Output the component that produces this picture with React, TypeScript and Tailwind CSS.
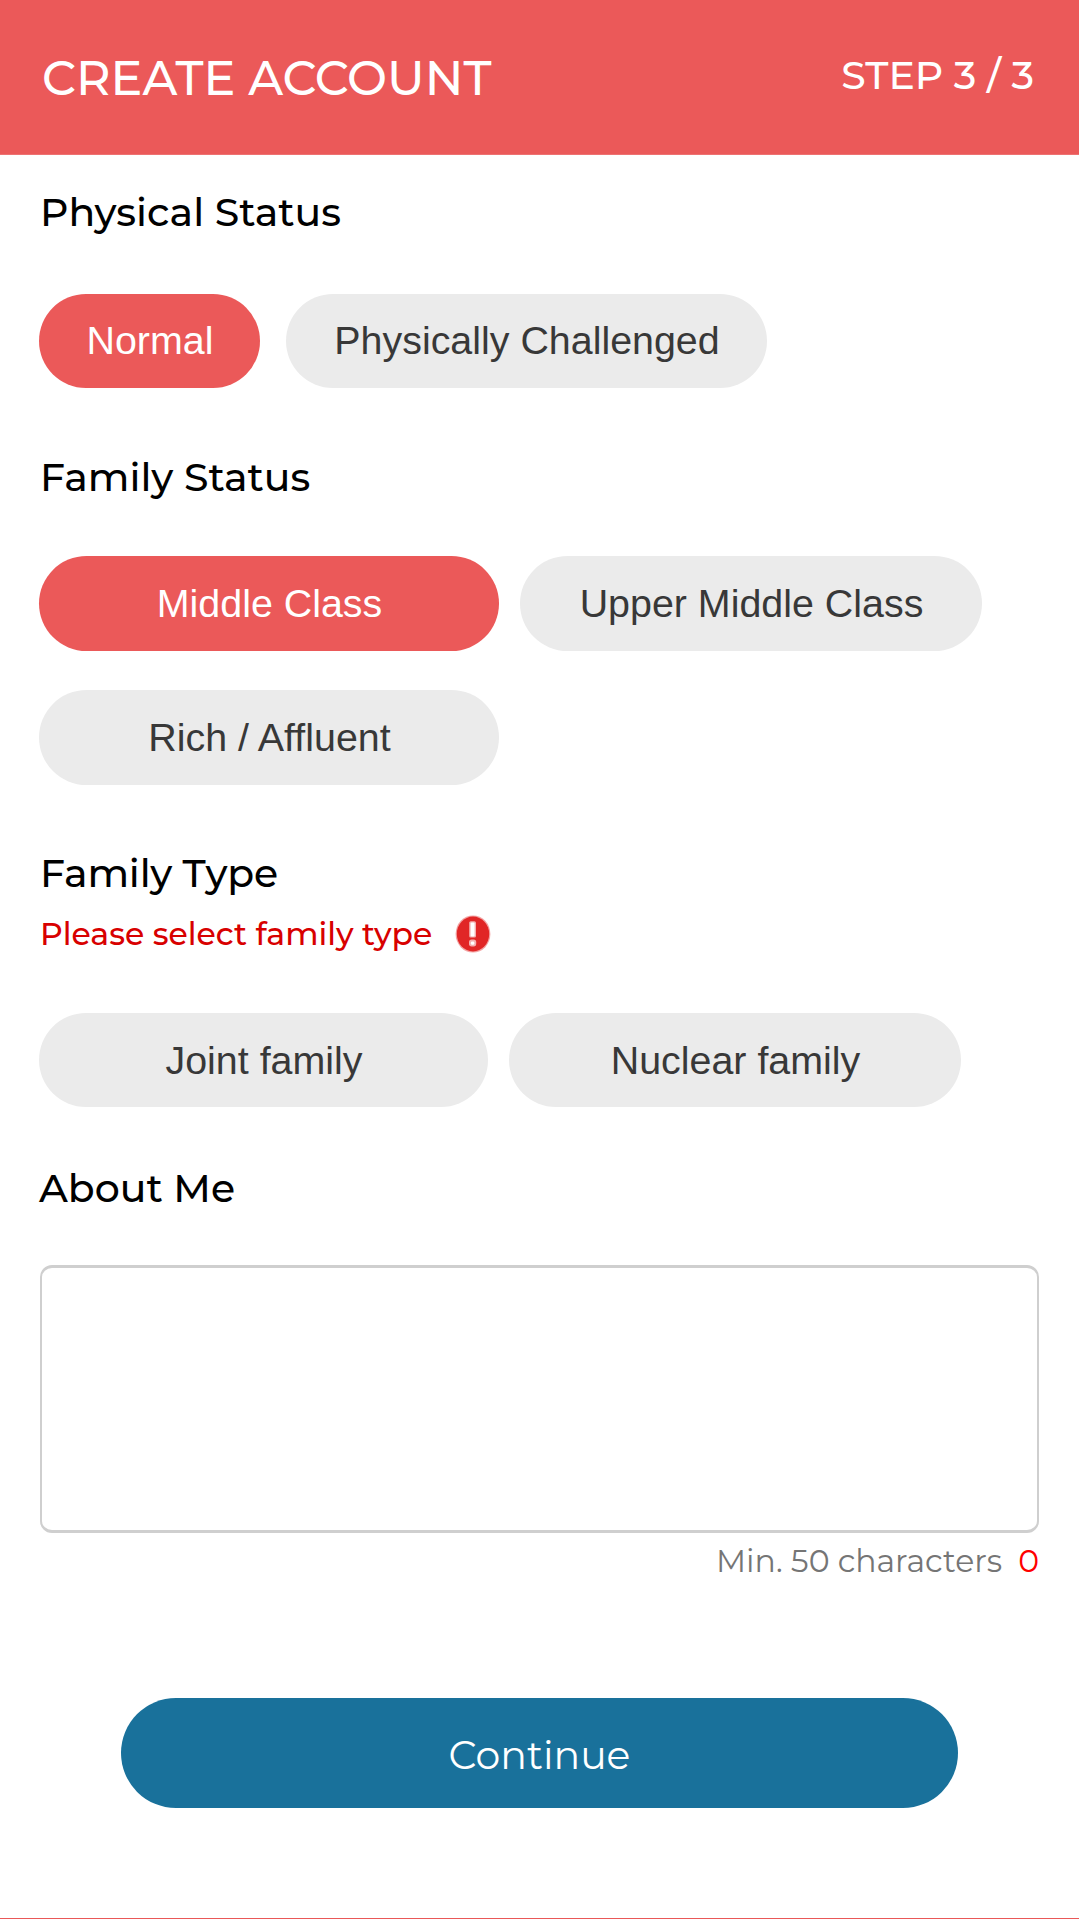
import { useState } from "react";

const MONTSERRAT = "font-['Montserrat','Inter',sans-serif]";

function Heading({ children, className }: { children: string; className: string }) {
  return (
    <h2 className={`h-12 text-[39.4px] leading-[48px] font-medium text-black ${className}`}>
      {children}
    </h2>
  );
}

function Pill({
  label,
  selected,
  onClick,
  className,
}: {
  label: string;
  selected: boolean;
  onClick: () => void;
  className: string;
}) {
  return (
    <button
      type="button"
      onClick={onClick}
      className={`shrink-0 rounded-full pl-px text-center font-['Liberation_Sans',Arial,sans-serif] text-[39.4px] leading-[48px] whitespace-nowrap ${
        selected ? "bg-[#eb5959] text-white" : "bg-[#ebebeb] text-[#383838]"
      } ${className}`}
    >
      {label}
    </button>
  );
}

function ErrorIcon() {
  return (
    <svg width="36" height="38" viewBox="0 0 36 38" className="ml-[23px] shrink-0" aria-hidden="true">
      <ellipse cx="18" cy="19" rx="17.4" ry="18.6" fill="#f3a3a3" />
      <ellipse cx="18" cy="19" rx="16.2" ry="17.4" fill="#e12626" />
      <rect x="14.2" y="6.2" width="6.8" height="16.4" rx="1.6" fill="#f3b0b0" />
      <rect x="15.6" y="7.4" width="4" height="14" rx="1.2" fill="#fff" />
      <rect x="14" y="24.6" width="7.2" height="6.8" rx="2.6" fill="#f3b0b0" />
      <rect x="15.8" y="26.4" width="3.6" height="3.4" rx="1.4" fill="#fff" />
    </svg>
  );
}

export default function App() {
  const [physical, setPhysical] = useState("Normal");
  const [status, setStatus] = useState("Middle Class");
  const [type, setType] = useState("");
  const [about, setAbout] = useState("");

  return (
    <div
      className={`flex h-[1919px] w-[1079px] flex-col overflow-hidden border-b border-[#ea5858] bg-white ${MONTSERRAT}`}
    >
      <header className="flex h-[155px] shrink-0 items-start justify-between border-b border-[#ee7272] bg-[#eb5959] pr-[45px] pl-[42px] font-medium text-white">
        <h1 className="mt-12 text-[47.6px] leading-[60px]">CREATE ACCOUNT</h1>
        <span className="mt-[51px] text-[39.4px] leading-[48px]">STEP 3 / 3</span>
      </header>

      <main className="flex flex-col px-[39px]">
        <Heading className="mt-[33px] ml-px">Physical Status</Heading>
        <div className="mt-[58px] flex gap-[26px]">
          <Pill className="h-[94px] w-[221px] pb-[3px]" label="Normal" selected={physical === "Normal"} onClick={() => setPhysical("Normal")} />
          <Pill
            className="h-[94px] w-[481px] pb-[3px]"
            label="Physically Challenged"
            selected={physical === "Physically Challenged"}
            onClick={() => setPhysical("Physically Challenged")}
          />
        </div>

        <Heading className="mt-[65px] ml-px">Family Status</Heading>
        <div className="mt-[55px] flex flex-wrap gap-x-[21px] gap-y-[39px]">
          <Pill className="h-[95px] w-[460px] pb-px" label="Middle Class" selected={status === "Middle Class"} onClick={() => setStatus("Middle Class")} />
          <Pill
            className="h-[95px] w-[462px] pb-px"
            label="Upper Middle Class"
            selected={status === "Upper Middle Class"}
            onClick={() => setStatus("Upper Middle Class")}
          />
          <Pill className="h-[95px] w-[460px] pb-px" label="Rich / Affluent" selected={status === "Rich / Affluent"} onClick={() => setStatus("Rich / Affluent")} />
        </div>

        <Heading className="mt-[64px] ml-px tracking-[-0.2px]">Family Type</Heading>
        <div className="mt-[18px] ml-px flex h-[38px] items-center">
          <span className="text-[31.5px] leading-[38px] font-medium text-[#d80000]">Please select family type</span>
          <ErrorIcon />
        </div>
        <div className="mt-[60px] flex gap-[21px]">
          <Pill className="h-[94px] w-[449px] pb-px" label="Joint family" selected={type === "Joint family"} onClick={() => setType("Joint family")} />
          <Pill className="h-[94px] w-[452px] pb-px" label="Nuclear family" selected={type === "Nuclear family"} onClick={() => setType("Nuclear family")} />
        </div>

        <Heading className="mt-[57px]">About Me</Heading>
        <textarea
          value={about}
          onChange={(e) => setAbout(e.target.value)}
          aria-label="About Me"
          className="mt-[53px] ml-px block h-[268px] w-[999px] resize-none rounded-xl border-x-2 border-y-3 border-[#cfcfcf] bg-white p-4 text-[32px] outline-none"
        />
        <div className="mt-[9px] mr-px flex h-[38px] justify-end text-[31.5px] leading-[38px]">
          <span className="text-[#757575]">Min. 50 characters</span>
          <span className="ml-4 text-[#ff0000]">{about.length}</span>
        </div>

        <button
          type="button"
          className="mt-[118px] h-[110px] w-[837px] self-center rounded-full bg-[#19719b] pt-[4px] text-[39.4px] leading-[48px] text-white"
        >
          Continue
        </button>
      </main>
    </div>
  );
}
